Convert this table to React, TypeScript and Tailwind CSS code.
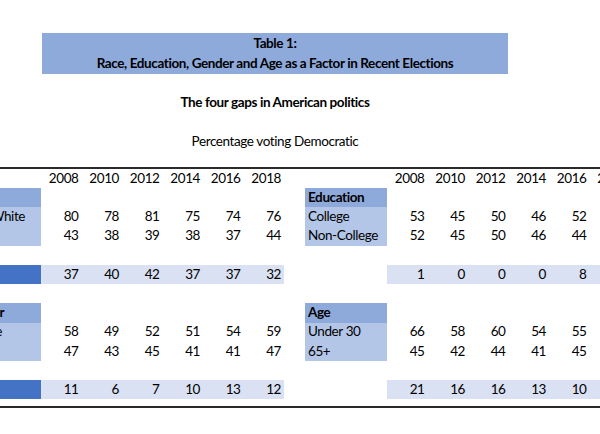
type Row = {
  label: string;
  values: (number | string)[];
  kind: "head" | "item" | "blank" | "gap";
};

type Block = {
  showGapLabel: boolean;
  rows: Row[];
};

const years = ["2008", "2010", "2012", "2014", "2016", "2018"];

const leftBlock: Block = {
  showGapLabel: true,
  rows: [
    { label: "Race", values: [], kind: "head" },
    { label: "Non-White", values: [80, 78, 81, 75, 74, 76], kind: "item" },
    { label: "White", values: [43, 38, 39, 38, 37, 44], kind: "item" },
    { label: "", values: [], kind: "blank" },
    { label: "Race Gap", values: [37, 40, 42, 37, 37, 32], kind: "gap" },
    { label: "", values: [], kind: "blank" },
    { label: "Gender", values: [], kind: "head" },
    { label: "Female", values: [58, 49, 52, 51, 54, 59], kind: "item" },
    { label: "Male", values: [47, 43, 45, 41, 41, 47], kind: "item" },
    { label: "", values: [], kind: "blank" },
    { label: "Gender Gap", values: [11, 6, 7, 10, 13, 12], kind: "gap" },
  ],
};

const rightBlock: Block = {
  showGapLabel: false,
  rows: [
    { label: "Education", values: [], kind: "head" },
    { label: "College", values: [53, 45, 50, 46, 52, 59], kind: "item" },
    { label: "Non-College", values: [52, 45, 50, 46, 44, 42], kind: "item" },
    { label: "", values: [], kind: "blank" },
    { label: "", values: [1, 0, 0, 0, 8, 17], kind: "gap" },
    { label: "", values: [], kind: "blank" },
    { label: "Age", values: [], kind: "head" },
    { label: "Under 30", values: [66, 58, 60, 54, 55, 67], kind: "item" },
    { label: "65+", values: [45, 42, 44, 41, 45, 48], kind: "item" },
    { label: "", values: [], kind: "blank" },
    { label: "", values: [21, 16, 16, 13, 10, 19], kind: "gap" },
  ],
};

const labelBg = (row: Row, showGapLabel: boolean) => {
  if (row.kind === "head") return "bg-[#8eaadb] font-bold";
  if (row.kind === "item") return "bg-[#b4c6e7]";
  if (row.kind === "gap" && showGapLabel) return "bg-[#4472c4] text-white font-bold";
  return "";
};

const DataBlock = ({ block }: { block: Block }) => {
  return (
    <div className="grid grid-cols-[82px_repeat(6,40.5px)] auto-rows-[19.2px] shrink-0">
      <div className="h-[20px]" />
      {years.map((y) => (
        <div key={y} className="h-[20px] flex items-center justify-end pr-[3px]">
          {y}
        </div>
      ))}
      {block.rows.map((row, i) => (
        <div key={i} className="contents">
          <div className={`flex items-center pl-[3px] whitespace-nowrap overflow-hidden ${labelBg(row, block.showGapLabel)}`}>
            {row.kind === "gap" ? "" : row.label}
          </div>
          {years.map((y, j) => (
            <div
              key={y}
              className={`flex items-center justify-end pr-[3px] ${row.kind === "gap" ? "bg-[#d9e1f2]" : ""}`}
            >
              {row.values[j] ?? ""}
            </div>
          ))}
        </div>
      ))}
    </div>
  );
};

export default function App() {
  return (
    <div className="w-[600px] h-[434px] overflow-hidden bg-white text-black font-['Lato',sans-serif] text-[13.5px] tracking-[-0.4px] leading-none">
      <div className="pt-[33px]">
        <div className="ml-[42px] w-[466px] h-[41px] bg-[#8eaadb] flex flex-col items-center justify-center gap-[6px] font-bold">
          <p>Table 1:</p>
          <p>Race, Education, Gender and Age as a Factor in Recent Elections</p>
        </div>
        <p className="w-[550px] text-center font-bold mt-[22px]">The four gaps in American politics</p>
        <p className="w-[550px] text-center mt-[25px]">Percentage voting Democratic</p>
      </div>
      <div className="mt-[19px] border-t-2 border-b-2 border-[#2a2a2a] pb-[7px] w-[600px] overflow-hidden">
        <div className="flex ml-[-41px] w-max">
          <DataBlock block={leftBlock} />
          <div className="w-[21px] shrink-0" />
          <DataBlock block={rightBlock} />
        </div>
      </div>
    </div>
  );
}
